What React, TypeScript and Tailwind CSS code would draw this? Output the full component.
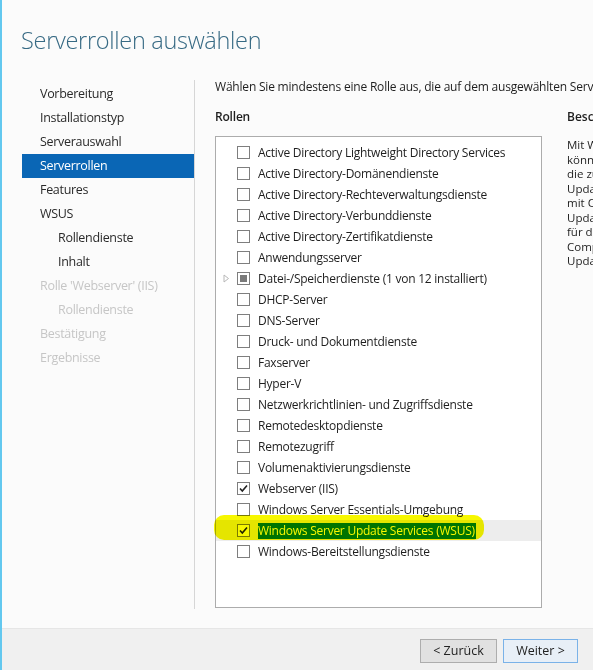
import { ReactNode } from 'react'

interface Role {
  name: string
  state: 'off' | 'on' | 'partial'
  expandable?: boolean
  selected?: boolean
}

const roles: Role[] = [
  { name: 'Active Directory Lightweight Directory Services', state: 'off' },
  { name: 'Active Directory-Domänendienste', state: 'off' },
  { name: 'Active Directory-Rechteverwaltungsdienste', state: 'off' },
  { name: 'Active Directory-Verbunddienste', state: 'off' },
  { name: 'Active Directory-Zertifikatdienste', state: 'off' },
  { name: 'Anwendungsserver', state: 'off' },
  { name: 'Datei-/Speicherdienste (1 von 12 installiert)', state: 'partial', expandable: true },
  { name: 'DHCP-Server', state: 'off' },
  { name: 'DNS-Server', state: 'off' },
  { name: 'Druck- und Dokumentdienste', state: 'off' },
  { name: 'Faxserver', state: 'off' },
  { name: 'Hyper-V', state: 'off' },
  { name: 'Netzwerkrichtlinien- und Zugriffsdienste', state: 'off' },
  { name: 'Remotedesktopdienste', state: 'off' },
  { name: 'Remotezugriff', state: 'off' },
  { name: 'Volumenaktivierungsdienste', state: 'off' },
  { name: 'Webserver (IIS)', state: 'on' },
  { name: 'Windows Server Essentials-Umgebung', state: 'off' },
  { name: 'Windows Server Update Services (WSUS)', state: 'on', selected: true },
  { name: 'Windows-Bereitstellungsdienste', state: 'off' },
]

const steps = [
  { label: 'Vorbereitung' },
  { label: 'Installationstyp' },
  { label: 'Serverauswahl' },
  { label: 'Serverrollen', active: true },
  { label: 'Features' },
  { label: 'WSUS' },
  { label: 'Rollendienste', sub: true },
  { label: 'Inhalt', sub: true },
  { label: "Rolle 'Webserver' (IIS)", disabled: true },
  { label: 'Rollendienste', sub: true, disabled: true },
  { label: 'Bestätigung', disabled: true },
  { label: 'Ergebnisse', disabled: true },
]

// description is cut off by the window edge, like in the wizard screenshot
const description = [
  'Mit Windows Server Update Services (WSUS)',
  'können Netzwerkadministratoren',
  'die zu installierenden Microsoft-',
  'Updates angeben, verschiedene Gruppen',
  'mit Computern für unterschiedliche',
  'Updatesätze erstellen und Berichte',
  'für die Kompatibilitätsebenen der',
  'Computer und die erforderlichen',
  'Updates abrufen.',
]

function Checkbox({ state }: { state: Role['state'] }) {
  return (
    <span className="w-[13px] h-[13px] border border-[#7e7e7e] bg-white flex items-center justify-center shrink-0">
      {state === 'partial' && <span className="w-[7px] h-[7px] bg-[#7a7a7a]" />}
      {state === 'on' && (
        <svg width="11" height="11" viewBox="0 0 11 11">
          <path d="M2 5.5 L4.3 8 L9 2.5" fill="none" stroke="#222" strokeWidth="1.6" />
        </svg>
      )}
    </span>
  )
}

function Button({ children, primary }: { children: ReactNode; primary?: boolean }) {
  return (
    <button
      className={
        primary
          ? 'w-[75px] h-[24px] border border-[#7ab2e8] bg-[#e8eff7] text-[12.5px] text-[#222]'
          : 'w-[77px] h-[24px] border border-[#adadad] bg-[#e1e1e1] text-[12.5px] text-[#222]'
      }
    >
      {children}
    </button>
  )
}

export default function App() {
  return (
    <div className="w-[593px] h-[670px] bg-[#fbfbfb] border-l-2 border-[#63c8ef] flex flex-col overflow-hidden font-['Open_Sans',sans-serif] text-[#1e1e1e]">
      {/* Header */}
      <h1 className="pl-[19px] pt-[23px] h-[80px] text-[23.5px] font-light text-[#376a84] leading-[34px] tracking-[-0.3px]">
        Serverrollen auswählen
      </h1>

      <div className="flex h-[529px]">
        {/* Wizard steps */}
        <div className="w-[193px] border-r border-[#d6d6d6] pt-[2px]">
          {steps.map((s, i) => (
            <div
              key={i}
              className={
                'h-6 ml-[20px] w-[172px] flex items-center text-[12.5px] tracking-[-0.3px] ' +
                (s.sub ? 'pl-[36px] ' : 'pl-[18px] ') +
                (s.active ? 'bg-[#0a66b5] text-white' : s.disabled ? 'text-[#c6c6c6]' : 'text-[#2a2a2a]')
              }
            >
              {s.label}
            </div>
          ))}
        </div>

        {/* Content */}
        <div className="flex-1 pl-[20px] overflow-hidden">
          <p className="h-[17px] mt-[-2px] text-[12px] whitespace-nowrap tracking-[-0.2px]">
            Wählen Sie mindestens eine Rolle aus, die auf dem ausgewählten Server installiert werden soll.
          </p>
          <div className="flex gap-[25px] mt-[13px]">
            <div className="w-[327px] shrink-0">
              <div className="text-[12px] font-semibold h-[19px] tracking-[-0.2px]">Rollen</div>
              <div className="relative mt-[9px] h-[472px] border border-[#acacac] bg-white pt-[5px]">
                {roles.map((r) => (
                  <div
                    key={r.name}
                    className={'h-[21px] flex items-center ' + (r.selected ? 'bg-[#ededed]' : '')}
                  >
                    <span className="w-[21px] flex justify-center">
                      {r.expandable && (
                        <svg width="7" height="9" viewBox="0 0 7 9">
                          <path d="M1 1 L5.5 4.5 L1 8 Z" fill="none" stroke="#b8b8b8" strokeWidth="1" />
                        </svg>
                      )}
                    </span>
                    <Checkbox state={r.state} />
                    <span
                      className={
                        'ml-[8px] text-[12px] tracking-[-0.25px] whitespace-nowrap leading-[16px] ' +
                        (r.selected ? 'bg-[#0078d7] text-white pr-px' : '')
                      }
                    >
                      {r.name}
                    </span>
                  </div>
                ))}
                {/* yellow marker over the WSUS row */}
                <div className="absolute left-[-2px] top-[378px] w-[270px] h-[25px] rounded-[10px] bg-[#f7f700] mix-blend-multiply" />
              </div>
            </div>

            <div className="w-[200px] shrink-0">
              <div className="text-[12px] font-semibold h-[19px] whitespace-nowrap">Beschreibung</div>
              <div className="mt-[11px] text-[11.5px] leading-[14.5px] whitespace-nowrap">
                {description.map((line) => (
                  <div key={line}>{line}</div>
                ))}
              </div>
            </div>
          </div>
        </div>
      </div>

      <div className="h-[19px]" />

      {/* Footer */}
      <div className="flex-1 bg-[#f0f0f0] border-t border-[#e6e6e6] flex items-start justify-end gap-[6px] pt-[10px] pr-[15px]">
        <Button>&lt; Zurück</Button>
        <Button primary>Weiter &gt;</Button>
      </div>
    </div>
  )
}
